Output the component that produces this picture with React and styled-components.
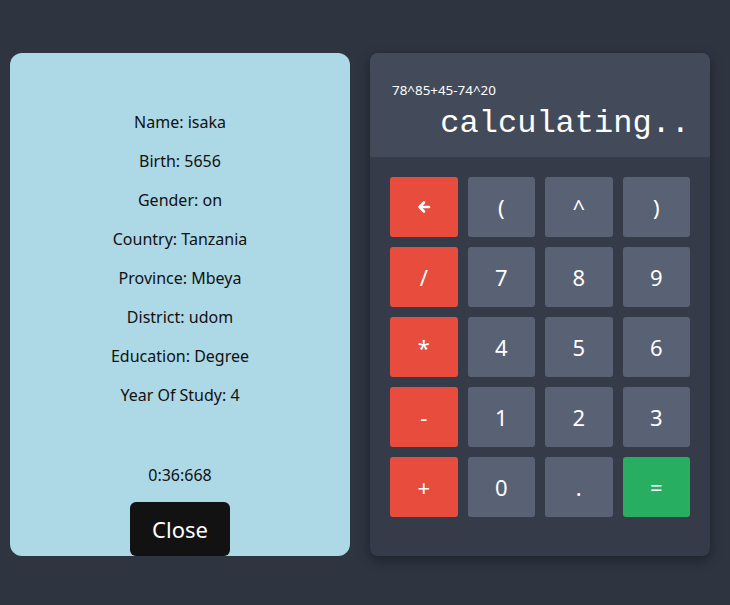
import React from "react";
import styled, { createGlobalStyle } from "styled-components";

const Global = createGlobalStyle`
  html, body { margin: 0; padding: 0; background: #2e3440; }
  body { font-family: "Noto Sans", "Open Sans", sans-serif; width: 730px; height: 605px; overflow: hidden; }
`;

const Page = styled.div`
  display: flex;
  gap: 20px;
  padding: 53px 20px 0 10px;
  align-items: flex-start;
`;

const InfoCard = styled.div`
  width: 340px;
  height: 503px;
  box-sizing: border-box;
  background: #add8e6;
  border-radius: 12px;
  display: flex;
  flex-direction: column;
  align-items: center;
  padding-top: 42px;
  color: #111;
`;

const InfoLine = styled.p`
  margin: 16px 0 0;
  font-size: 16px;
  line-height: 23px;
`;

const Timer = styled.p`
  margin: 57px 0 0;
  font-size: 16px;
  line-height: 23px;
`;

const CloseButton = styled.button`
  margin-top: 15px;
  width: 100px;
  height: 54px;
  border: none;
  border-radius: 6px;
  background: #121212;
  color: #fff;
  font-family: "Noto Sans", sans-serif;
  font-size: 22px;
  cursor: pointer;
`;

const Calc = styled.div`
  width: 340px;
  height: 503px;
  border-radius: 8px;
  overflow: hidden;
  background: #363b4a;
  box-shadow: 0 4px 12px rgba(0, 0, 0, 0.35);
  display: flex;
  flex-direction: column;
`;

const Display = styled.div`
  height: 104px;
  box-sizing: border-box;
  background: #434b5a;
  padding: 28px 20px 0 22px;
  display: flex;
  flex-direction: column;
  color: #fff;
`;

const Expression = styled.div`
  font-size: 13.4px;
  line-height: 18px;
`;

const Result = styled.div`
  font-family: "Liberation Mono", "DejaVu Sans Mono", monospace;
  font-size: 32px;
  line-height: 36px;
  text-align: right;
  margin-top: 7px;
`;

const Keypad = styled.div`
  display: grid;
  grid-template-columns: repeat(4, 1fr);
  grid-auto-rows: 60px;
  gap: 10px;
  padding: 20px;
`;

const colors = { op: "#e74c3c", num: "#596275", eq: "#27ae60" };

const Key = styled.button`
  border: none;
  border-radius: 3px;
  background: ${(p) => colors[p.$kind]};
  color: #fff;
  font-family: "Noto Sans", sans-serif;
  font-size: 22px;
  display: flex;
  align-items: center;
  justify-content: center;
  padding: 0;
  cursor: pointer;
`;

const Arrow = () => (
  <svg width="16" height="16" viewBox="0 0 16 16" fill="none" stroke="#fff" strokeWidth="2.6" strokeLinecap="round" strokeLinejoin="round">
    <path d="M13 8H3.5M8 3.5L3.5 8L8 12.5" />
  </svg>
);

const info = [
  "Name: isaka",
  "Birth: 5656",
  "Gender: on",
  "Country: Tanzania",
  "Province: Mbeya",
  "District: udom",
  "Education: Degree",
  "Year Of Study: 4",
];

const keys = [
  [<Arrow key="a" />, "op"], ["(", "num"], ["^", "num"], [")", "num"],
  ["/", "op"], ["7", "num"], ["8", "num"], ["9", "num"],
  ["*", "op"], ["4", "num"], ["5", "num"], ["6", "num"],
  ["-", "op"], ["1", "num"], ["2", "num"], ["3", "num"],
  ["+", "op"], ["0", "num"], [".", "num"], ["=", "eq"],
];

export default function App() {
  return (
    <>
      <Global />
      <Page>
        <InfoCard>
          {info.map((t) => (
            <InfoLine key={t}>{t}</InfoLine>
          ))}
          <Timer>0:36:668</Timer>
          <CloseButton>Close</CloseButton>
        </InfoCard>
        <Calc>
          <Display>
            <Expression>78^85+45-74^20</Expression>
            <Result>calculating..</Result>
          </Display>
          <Keypad>
            {keys.map(([label, kind], i) => (
              <Key key={i} $kind={kind}>{label}</Key>
            ))}
          </Keypad>
        </Calc>
      </Page>
    </>
  );
}
